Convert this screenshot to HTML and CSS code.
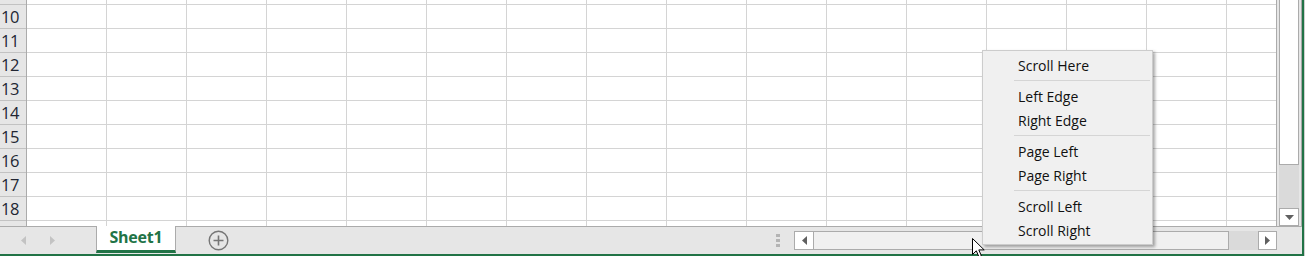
FILE: index.html
```html
<!DOCTYPE html>
<html lang="en">
<head>
<meta charset="utf-8">
<title>Sheet1</title>
<link rel="stylesheet" href="styles.css">
</head>
<body>
<div class="app">
  <div class="frame">
    <div class="sheet">
      <div class="rowheads">
        <div class="rh rh-top"></div>
        <div class="rh">10</div>
        <div class="rh">11</div>
        <div class="rh">12</div>
        <div class="rh">13</div>
        <div class="rh">14</div>
        <div class="rh">15</div>
        <div class="rh">16</div>
        <div class="rh">17</div>
        <div class="rh">18</div>
        <div class="rh rh-bottom"></div>
      </div>
      <div class="cells"></div>
      <div class="vscroll">
        <div class="vthumb"></div>
        <div class="vtrack"></div>
        <div class="sbtn vbtn">
          <svg width="9" height="5" viewBox="0 0 9 5"><path d="M0 0H9L4.5 5Z" fill="#606060"/></svg>
        </div>
      </div>
    </div>
    <div class="tabbar">
      <div class="nav">
        <svg width="5" height="9" viewBox="0 0 5 9"><path d="M5 0V9L0 4.5Z" fill="#c3c3c3"/></svg>
        <svg width="5" height="9" viewBox="0 0 5 9"><path d="M0 0V9L5 4.5Z" fill="#c3c3c3"/></svg>
      </div>
      <div class="tab">Sheet1</div>
      <div class="add">
        <svg width="21" height="21" viewBox="0 0 21 21"><circle cx="10.5" cy="10.5" r="9.3" fill="none" stroke="#767676" stroke-width="1.4"/><path d="M10.5 5.5V15.5M5.5 10.5H15.5" stroke="#767676" stroke-width="1.6"/></svg>
      </div>
      <div class="spacer"></div>
      <div class="dots"><span></span><span></span><span></span></div>
      <div class="hscroll">
        <div class="sbtn hbtn">
          <svg width="5" height="9" viewBox="0 0 5 9"><path d="M5 0V9L0 4.5Z" fill="#606060"/></svg>
        </div>
        <div class="hthumb"></div>
        <div class="htrack"></div>
        <div class="sbtn hbtn">
          <svg width="5" height="9" viewBox="0 0 5 9"><path d="M0 0V9L5 4.5Z" fill="#606060"/></svg>
        </div>
      </div>
    </div>
  </div>
  <div class="menu">
    <div class="mi">Scroll Here</div>
    <div class="sep"></div>
    <div class="mi">Left Edge</div>
    <div class="mi">Right Edge</div>
    <div class="sep"></div>
    <div class="mi">Page Left</div>
    <div class="mi">Page Right</div>
    <div class="sep"></div>
    <div class="mi">Scroll Left</div>
    <div class="mi">Scroll Right</div>
  </div>
  <svg class="cursor" width="14" height="22" viewBox="0 0 14 22"><path d="M0.5 0.5V16.5L4.3 12.8L6.9 18.8L9.4 17.8L6.8 11.9H12.2Z" fill="#fff" stroke="#000" stroke-width="1" stroke-linejoin="miter"/></svg>
</div>
</body>
</html>
```

FILE: styles.css
```css
* { box-sizing: border-box; }
html, body { margin: 0; padding: 0; }
body {
  width: 1305px;
  height: 256px;
  overflow: hidden;
  background: #ffffff;
  font-family: "Open Sans", "Noto Sans", sans-serif;
}
.app {
  position: relative;
  width: 1305px;
  height: 256px;
  border-right: 1px solid #cfcfcf;
}
.frame {
  width: 1304px;
  height: 256px;
  display: flex;
  flex-direction: column;
  border-right: 2px solid #217346;
  border-bottom: 2px solid #217346;
}
.sheet {
  height: 226px;
  display: flex;
  flex-direction: row;
}
.rowheads {
  width: 27px;
  background: #e6e6e6;
  border-right: 1px solid #ababab;
  display: flex;
  flex-direction: column;
  overflow: hidden;
}
.rh {
  height: 24px;
  flex: 0 0 24px;
  border-bottom: 1px solid #c2c2c2;
  font-size: 16.5px;
  line-height: 23px;
  color: #222633;
  padding-left: 1px;
  letter-spacing: -0.4px;
}
.rh-top { height: 5px; flex-basis: 5px; }
.rh-bottom { border-bottom: none; flex: 1 1 auto; }
.cells {
  flex: 1 1 auto;
  border-right: 1px solid #ababab;
  background-color: #ffffff;
  background-image:
    linear-gradient(to bottom, #d4d4d4 1px, transparent 1px),
    linear-gradient(to right, #d4d4d4 1px, transparent 1px);
  background-size: 100% 24px, 80px 100%;
  background-position: 0 4px, 79px 0;
}
.vscroll {
  width: 25px;
  background: #e6e6e6;
  border-right: 1px solid #a8a8a8;
  display: flex;
  flex-direction: column;
  padding: 0 2px 0 2px;
}
.vthumb {
  flex: 0 0 165px;
  background: #ffffff;
  border: 1px solid #ababab;
  border-top: none;
}
.vtrack {
  flex: 1 1 auto;
  background: #dadada;
}
.sbtn {
  background: #ffffff;
  border: 1px solid #ababab;
  display: flex;
  align-items: center;
  justify-content: center;
}
.vbtn {
  flex: 0 0 18px;
}
.tabbar {
  height: 28px;
  border-top: 1px solid #ababab;
  background: #e6e6e6;
  display: flex;
  flex-direction: row;
  align-items: center;
}
.nav {
  width: 96px;
  display: flex;
  align-items: center;
  gap: 24px;
  padding-left: 21px;
}
.nav svg { display: block; }
.tab {
  align-self: stretch;
  margin-top: -1px;
  width: 80px;
  background: #ffffff;
  border-left: 1px solid #ababab;
  border-right: 1px solid #ababab;
  border-bottom: 3px solid #217346;
  margin-bottom: 1px;
  color: #217346;
  font-weight: 700;
  font-size: 16px;
  line-height: 22px;
  text-align: center;
  letter-spacing: -0.2px;
}
.add {
  margin-left: 32px;
  display: flex;
}
.add svg { display: block; }
.spacer { flex: 1 1 auto; }
.dots {
  width: 4px;
  margin-right: 14px;
  display: flex;
  flex-direction: column;
  gap: 2px;
}
.dots span {
  display: block;
  width: 4px;
  height: 3px;
  background: #b4b4b4;
}
.hscroll {
  width: 483px;
  height: 19px;
  margin-right: 25px;
  display: flex;
  flex-direction: row;
}
.hbtn { width: 20px; }
.hbtn:last-child { width: 19px; }
.hthumb {
  width: 415px;
  background: #f0f0f0;
  border: 1px solid #ababab;
  border-left: none;
}
.htrack {
  flex: 1 1 auto;
  background: #dadada;
}
.menu {
  position: absolute;
  left: 982px;
  top: 50px;
  width: 171px;
  height: 195px;
  background: #f0f0f0;
  border: 1px solid #cccccc;
  box-shadow: 2px 2px 3px rgba(0, 0, 0, 0.35);
  padding: 3px 0 1px 0;
}
.mi {
  height: 24px;
  line-height: 24px;
  padding-left: 35px;
  font-size: 14px;
  color: #111111;
}
.sep {
  height: 7px;
  margin: 0 2px 0 31px;
  padding-top: 2px;
}
.sep::before {
  content: "";
  display: block;
  height: 1px;
  background: #d5d5d5;
}
.cursor {
  position: absolute;
  left: 972px;
  top: 238px;
}
```
